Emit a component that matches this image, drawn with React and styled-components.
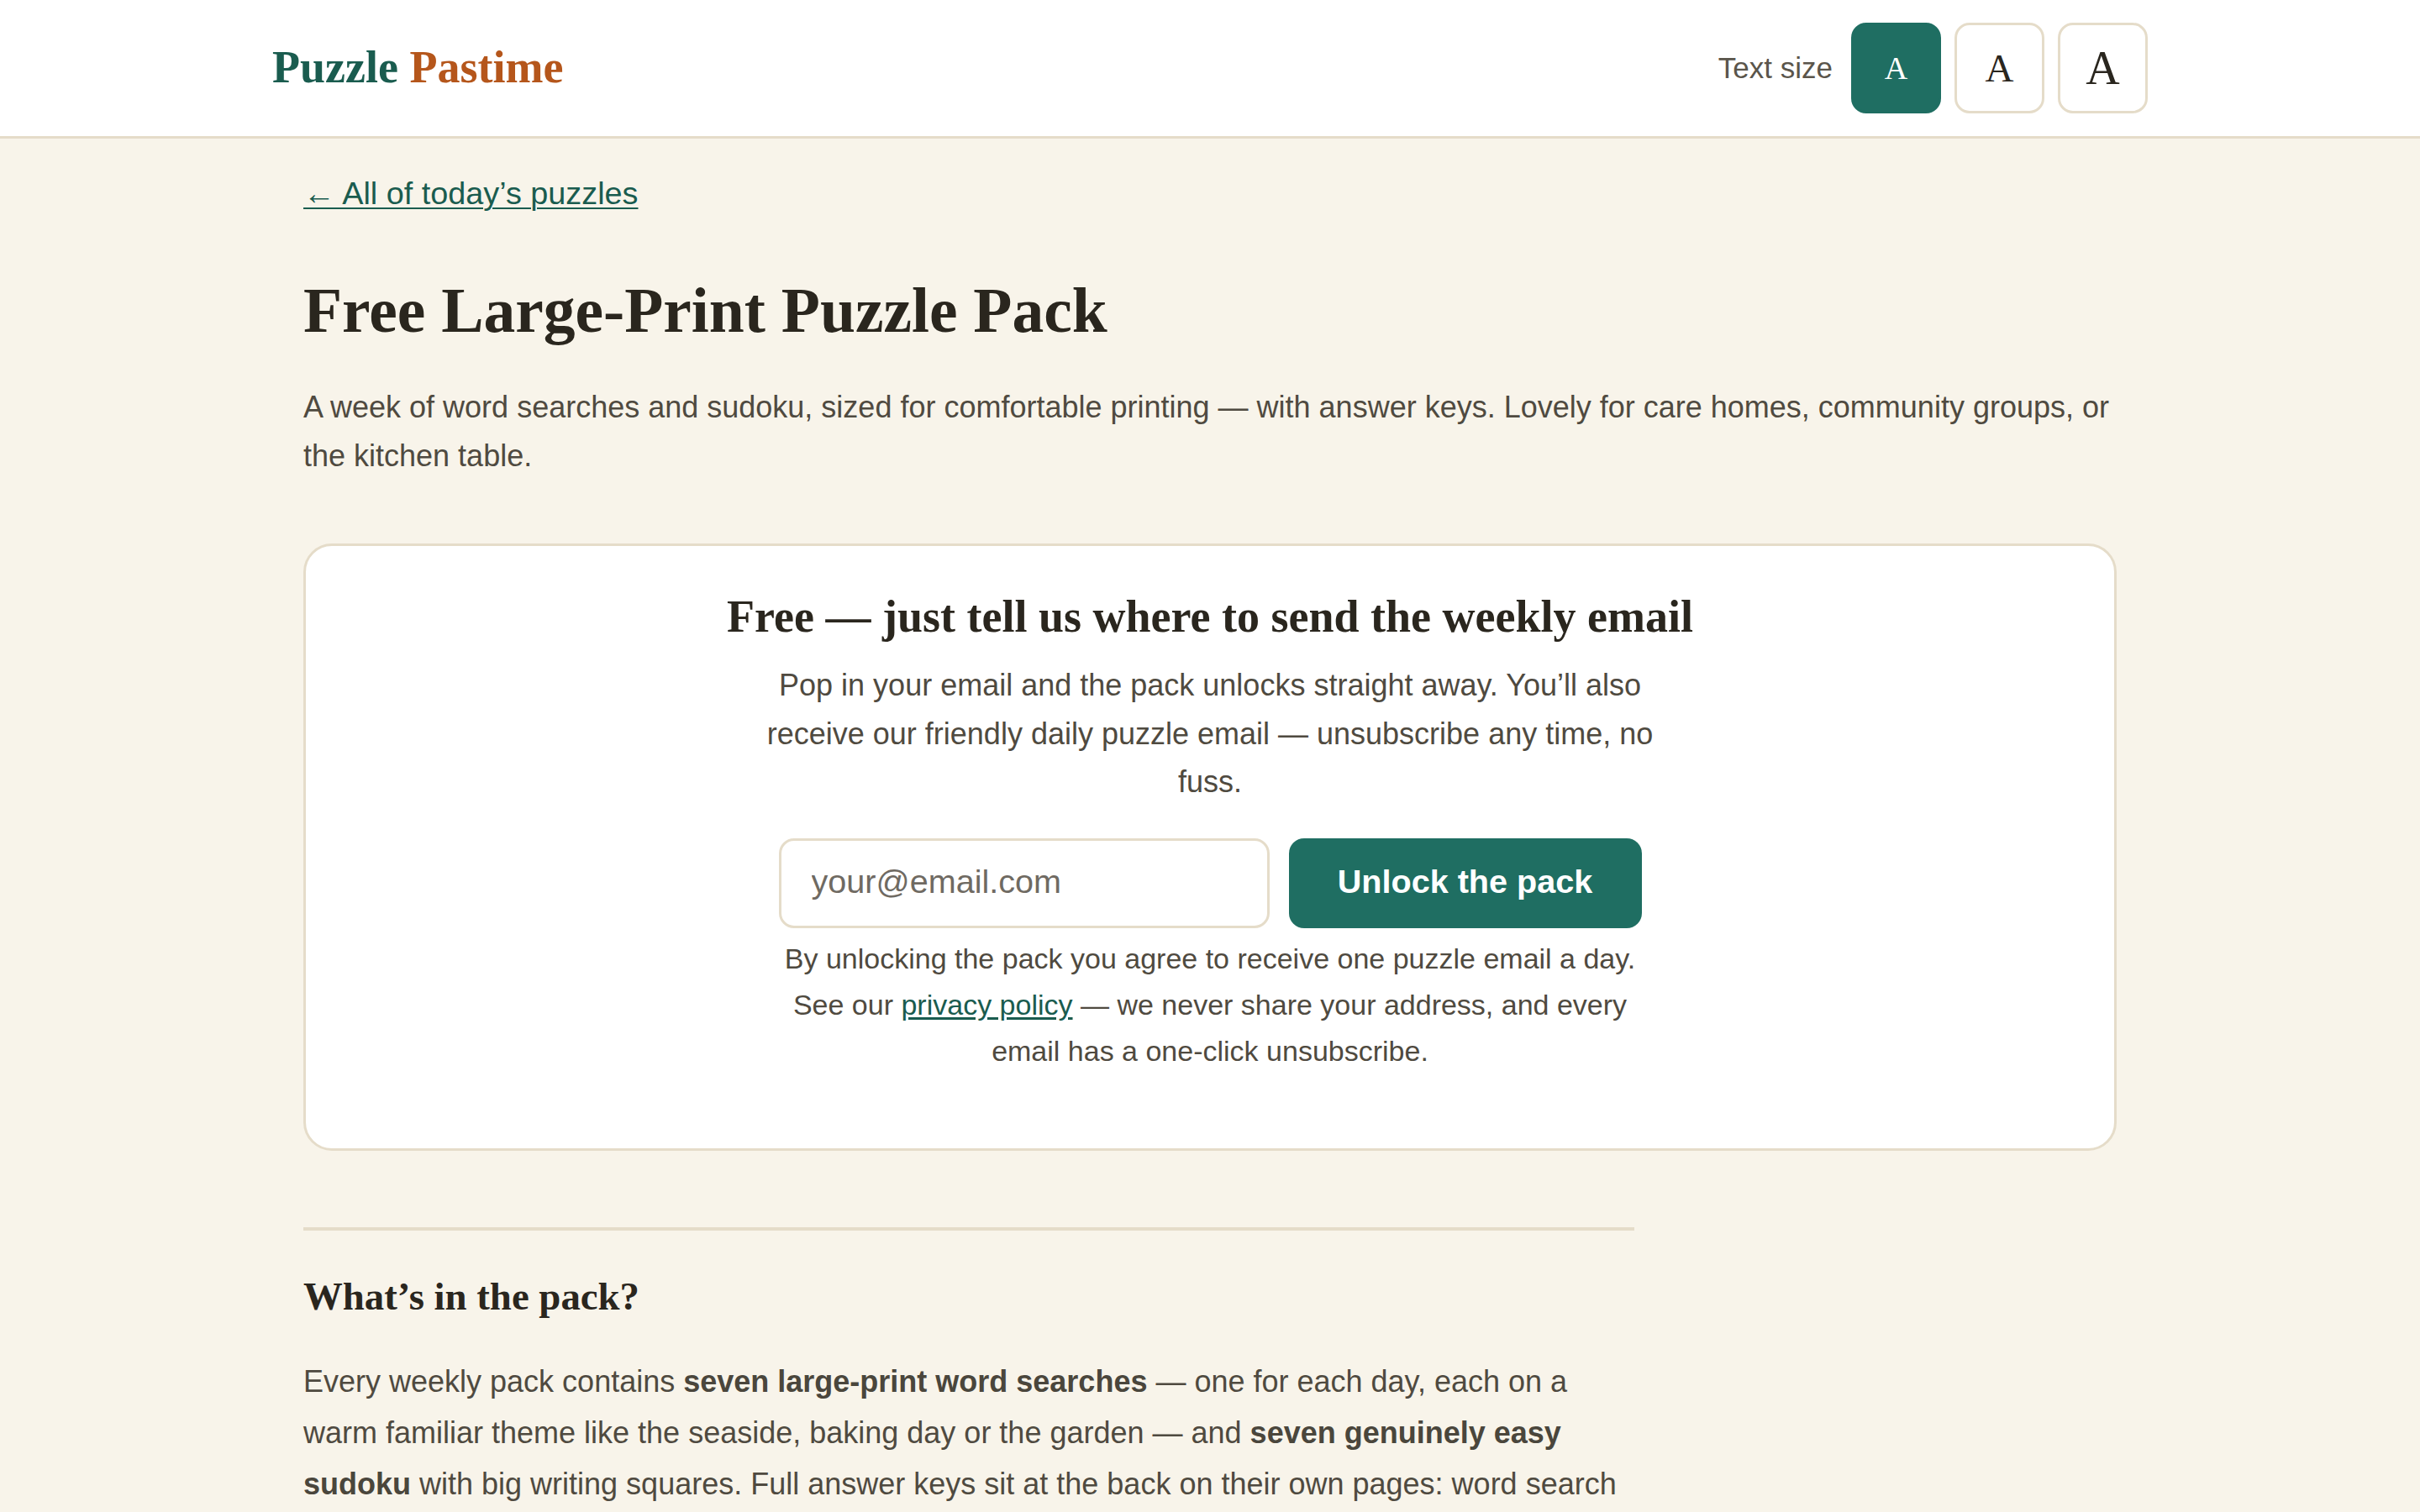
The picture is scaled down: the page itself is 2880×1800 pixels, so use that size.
import React, { useState } from "react";
import styled, { createGlobalStyle } from "styled-components";

const GlobalStyle = createGlobalStyle`
  html, body { margin: 0; padding: 0; }
  body {
    background: #f8f4ea;
    font-family: "Liberation Sans", Arial, sans-serif;
    font-size: 36px;
    color: #4f4a40;
  }
  * { box-sizing: border-box; }
`;

const teal = "#1f6e62";
const deepGreen = "#1a5c4f";
const line = "#e5dcc9";
const ink = "#2a261e";
const body = "#4f4a40";

const Header = styled.header`
  background: #ffffff;
  border-bottom: 3px solid ${line};
`;

const HeaderInner = styled.div`
  max-width: 2232px;
  margin: 0 auto;
  padding: 27px 0;
  display: flex;
  align-items: center;
  justify-content: space-between;
`;

const Logo = styled.a`
  font-family: "Liberation Serif", "Times New Roman", serif;
  font-weight: 700;
  font-size: 54px;
  color: ${deepGreen};
  text-decoration: none;
  line-height: 1;
  margin-top: -2px;
`;

const LogoAccent = styled.span`
  color: #b5561b;
`;

const SizeControls = styled.div`
  display: flex;
  align-items: center;
  gap: 16px;
`;

const SizeLabel = styled.span`
  font-size: 35px;
  color: #5a554b;
  margin-right: 6px;
`;

const SizeButton = styled.button`
  width: 107px;
  height: 108px;
  border-radius: 18px;
  border: 3px solid ${(p) => (p.$active ? teal : line)};
  background: ${(p) => (p.$active ? teal : "#ffffff")};
  color: ${(p) => (p.$active ? "#ffffff" : ink)};
  font-family: "Liberation Serif", "Times New Roman", serif;
  font-size: ${(p) => p.$size}px;
  line-height: 1;
  padding: 0;
  cursor: pointer;
  display: flex;
  align-items: center;
  justify-content: center;
`;

const Main = styled.main`
  max-width: 2158px;
  margin: 0 auto;
  padding: 36px 0 120px;
`;

const BackLink = styled.a`
  display: inline-block;
  font-size: 37.8px;
  line-height: 1.57;
  color: ${deepGreen};
  text-decoration: underline;
  text-underline-offset: 4px;
  text-decoration-thickness: 2px;
`;

const Title = styled.h1`
  font-family: "Liberation Serif", "Times New Roman", serif;
  font-weight: 700;
  font-size: 75.5px;
  line-height: 1.2;
  color: ${ink};
  margin: 65px 0 40px;
`;

const Lede = styled.p`
  font-size: 36px;
  line-height: 1.6;
  color: ${body};
  margin: 0 0 76px;
`;

const Card = styled.section`
  background: #ffffff;
  border: 3px solid ${line};
  border-radius: 34px;
  padding: 52px 60px 88px;
  display: flex;
  flex-direction: column;
  align-items: center;
  text-align: center;
`;

const CardTitle = styled.h2`
  font-family: "Liberation Serif", "Times New Roman", serif;
  font-weight: 700;
  font-size: 54px;
  line-height: 1.2;
  color: ${ink};
  margin: 0 0 20px;
`;

const CardText = styled.p`
  max-width: 1080px;
  font-size: 36px;
  line-height: 1.6;
  color: ${body};
  margin: 0 0 38px;
`;

const SignupForm = styled.form`
  display: flex;
  gap: 23px;
  justify-content: center;
  margin-bottom: 9px;
`;

const EmailInput = styled.input`
  width: 584px;
  height: 107px;
  border: 3px solid ${line};
  border-radius: 18px;
  padding: 0 36px 4px;
  font-family: "Liberation Sans", Arial, sans-serif;
  font-size: 39.6px;
  color: ${ink};
  background: #ffffff;
  outline: none;
  &::placeholder {
    color: #6f6a62;
  }
`;

const UnlockButton = styled.button`
  width: 420px;
  height: 107px;
  border: none;
  border-radius: 18px;
  background: ${teal};
  color: #ffffff;
  font-family: "Liberation Sans", Arial, sans-serif;
  font-weight: 700;
  font-size: 39.6px;
  padding: 0 0 4px;
  cursor: pointer;
`;

const FinePrint = styled.p`
  max-width: 1040px;
  font-size: 34px;
  line-height: 1.62;
  color: ${body};
  margin: 0;
`;

const InlineLink = styled.a`
  color: ${deepGreen};
  text-decoration: underline;
  text-underline-offset: 3px;
`;

const Article = styled.article`
  max-width: 1584px;
`;

const Divider = styled.hr`
  border: none;
  border-top: 4px solid ${line};
  margin: 91px 0 0;
`;

const SectionTitle = styled.h2`
  font-family: "Liberation Serif", "Times New Roman", serif;
  font-weight: 700;
  font-size: 46.8px;
  line-height: 1.22;
  color: ${ink};
  margin: 50px 0 42px;
`;

const BodyText = styled.p`
  font-size: 36px;
  line-height: 1.7;
  color: ${body};
  margin: 0 0 36px;
  strong {
    font-weight: 700;
    color: #4a463c;
  }
`;

export default function App() {
  const [size, setSize] = useState(0);
  const sizes = [38, 47, 56];
  return (
    <>
      <GlobalStyle />
      <Header>
        <HeaderInner>
          <Logo href="#">
            Puzzle <LogoAccent>Pastime</LogoAccent>
          </Logo>
          <SizeControls>
            <SizeLabel>Text size</SizeLabel>
            {sizes.map((s, i) => (
              <SizeButton
                key={s}
                $size={s}
                $active={size === i}
                onClick={() => setSize(i)}
                aria-label={`Text size ${i + 1}`}
              >
                A
              </SizeButton>
            ))}
          </SizeControls>
        </HeaderInner>
      </Header>
      <Main>
        <BackLink href="#">← All of today’s puzzles</BackLink>
        <Title>Free Large-Print Puzzle Pack</Title>
        <Lede>
          A week of word searches and sudoku, sized for comfortable printing — with answer keys.
          Lovely for care homes, community groups, or the kitchen table.
        </Lede>
        <Card>
          <CardTitle>Free — just tell us where to send the weekly email</CardTitle>
          <CardText>
            Pop in your email and the pack unlocks straight away. You’ll also receive our friendly
            daily puzzle email — unsubscribe any time, no fuss.
          </CardText>
          <SignupForm onSubmit={(e) => e.preventDefault()}>
            <EmailInput type="email" placeholder="your@email.com" />
            <UnlockButton type="submit">Unlock the pack</UnlockButton>
          </SignupForm>
          <FinePrint>
            By unlocking the pack you agree to receive one puzzle email a day. See our{" "}
            <InlineLink href="#">privacy policy</InlineLink> — we never share your address, and
            every email has a one-click unsubscribe.
          </FinePrint>
        </Card>
        <Article>
          <Divider />
          <SectionTitle>What’s in the pack?</SectionTitle>
          <BodyText>
            Every weekly pack contains <strong>seven large-print word searches</strong> — one for
            each day, each on a warm familiar theme like the seaside, baking day or the garden — and{" "}
            <strong>seven genuinely easy sudoku</strong> with big writing squares. Full answer keys
            sit at the back on their own pages: word search answers are circled, and sudoku answers
            are filled in clearly.
          </BodyText>
        </Article>
      </Main>
    </>
  );
}
